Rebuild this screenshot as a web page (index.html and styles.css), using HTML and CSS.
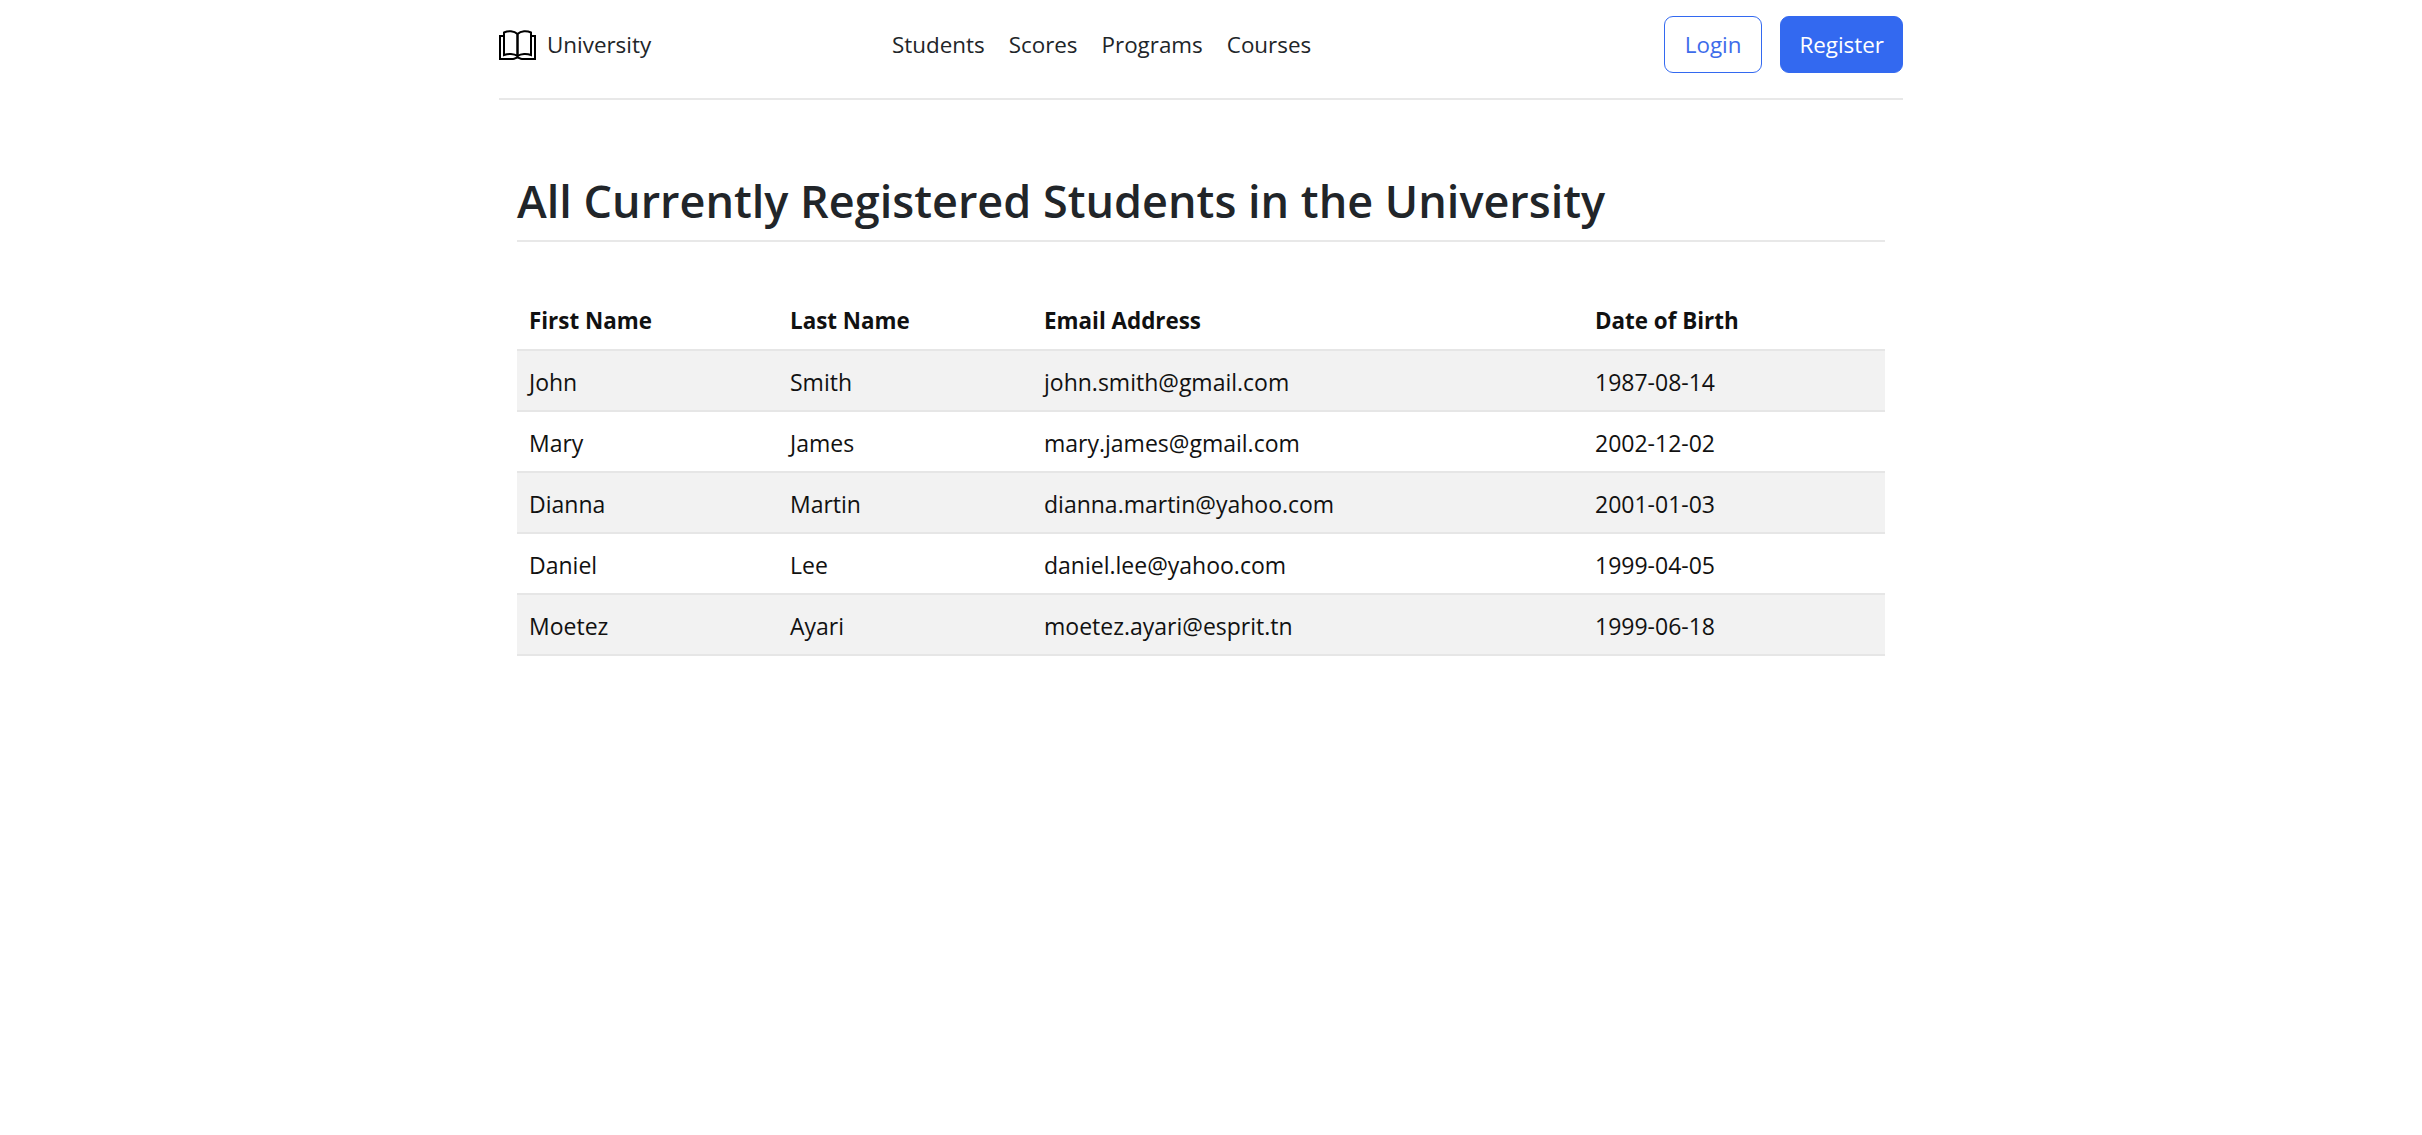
FILE: index.html
```html
<!DOCTYPE html>
<html lang="en">
<head>
    <meta charset="UTF-8">
    <meta name="viewport" content="width=device-width, initial-scale=1.0">
    <title>University</title>
    <link rel="stylesheet" href="styles.css">
</head>
<body>
    <header class="site-header">
        <a class="brand" href="#">
            <svg class="brand-icon" viewBox="0 0 37 30" fill="none" stroke="#000" stroke-width="2">
                <path d="M5 2.500C9 .5 15 .5 18.500 4V26C15 23.500 9 23.500 5 25Z"/>
                <path d="M32 2.500C28 .5 22 .5 18.500 4V26C22 23.500 28 23.500 32 25Z"/>
                <path d="M5 6H1V29H14C16 29 17 27.500 18.500 27.500C20 27.500 21 29 23 29H36V6H32"/>
            </svg>
            <span>University</span>
        </a>
        <nav class="main-nav">
            <a href="#">Students</a>
            <a href="#">Scores</a>
            <a href="#">Programs</a>
            <a href="#">Courses</a>
        </nav>
        <div class="actions">
            <button class="btn btn-outline">Login</button>
            <button class="btn btn-primary">Register</button>
        </div>
    </header>

    <main class="content">
        <h2 class="page-title">All Currently Registered Students in the University</h2>
        <table class="students">
            <thead>
                <tr>
                    <th class="col-first">First Name</th>
                    <th class="col-last">Last Name</th>
                    <th class="col-email">Email Address</th>
                    <th>Date of Birth</th>
                </tr>
            </thead>
            <tbody>
                <tr><td>John</td><td>Smith</td><td>john.smith@gmail.com</td><td>1987-08-14</td></tr>
                <tr><td>Mary</td><td>James</td><td>mary.james@gmail.com</td><td>2002-12-02</td></tr>
                <tr><td>Dianna</td><td>Martin</td><td>dianna.martin@yahoo.com</td><td>2001-01-03</td></tr>
                <tr><td>Daniel</td><td>Lee</td><td>daniel.lee@yahoo.com</td><td>1999-04-05</td></tr>
                <tr><td>Moetez</td><td>Ayari</td><td>moetez.ayari@esprit.tn</td><td>1999-06-18</td></tr>
            </tbody>
        </table>
    </main>
</body>
</html>
```

FILE: styles.css
```css
body {
    font-family: "Open Sans", "Noto Sans", sans-serif;
    font-size: 22.4px;
    color: #212529;
    background: #fff;
    margin: 0;
    padding-right: 20px;
}
a {
    color: inherit;
    text-decoration: none;
}
.site-header {
    width: 1404px;
    height: 89px;
    margin: 0 auto;
    display: flex;
    align-items: center;
    border-bottom: 2px solid #e8e8e8;
    padding-bottom: 9px;
}
.brand {
    width: 393px;
    display: flex;
    align-items: center;
    gap: 11px;
}
.brand-icon {
    width: 37px;
    height: 30px;
}
.main-nav {
    flex: 1;
    display: flex;
    gap: 24px;
}
.actions {
    display: flex;
    gap: 18px;
}
.btn {
    font-family: inherit;
    font-size: 22.4px;
    height: 57px;
    padding: 0 18px;
    border-radius: 9px;
    border: 1px solid #3369f0;
}
.btn-outline {
    background: #fff;
    color: #3d6bea;
    padding: 0 20px;
}
.btn-primary {
    background: #3369f0;
    color: #fff;
}
.content {
    width: 1368px;
    margin: 0 auto;
    padding-top: 66px;
}
.page-title {
    font-size: 45px;
    font-weight: 600;
    line-height: 70px;
    padding-bottom: 4px;
    margin: 0 0 48px;
    border-bottom: 2px solid #e8e8e8;
}
.students {
    width: 100%;
    border-collapse: collapse;
}
.students th,
.students td {
    text-align: left;
    padding: 2px 12px 0;
    height: 57px;
    border-bottom: 2px solid #e6e6e6;
    color: #111;
}
.students td {
    font-size: 23px;
}
.students th {
    font-weight: 700;
}
.students tbody tr:nth-child(odd) {
    background: #f2f2f2;
}
.col-first { width: 237px; }
.col-last { width: 230px; }
.col-email { width: 527px; }
```
